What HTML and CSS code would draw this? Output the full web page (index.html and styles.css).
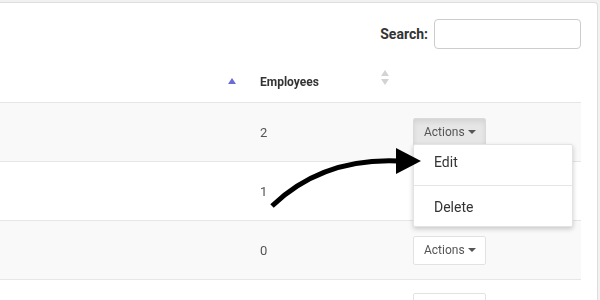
FILE: index.html
```html
<!DOCTYPE html>
<html lang="en">
  <head>
    <title>Departments</title>
    <meta charset="UTF-8" />
    <meta name="viewport" content="width=device-width, initial-scale=1.0" />
    <link rel="stylesheet" href="styles.css">
  </head>
  <body>
    <div class="card">
      <div class="search-row">
        <label for="search">Search:</label>
        <input id="search" type="search" class="search-input" />
      </div>

      <table class="data-table">
        <colgroup>
          <col class="col-name" />
          <col class="col-count" />
          <col class="col-actions" />
        </colgroup>
        <thead>
          <tr>
            <th>
              <div class="th-inner">
                <span></span>
                <span class="sort sort-asc"></span>
              </div>
            </th>
            <th>
              <div class="th-inner">
                <span>Employees</span>
                <span class="sort sort-both"></span>
              </div>
            </th>
            <th></th>
          </tr>
        </thead>
        <tbody>
          <tr class="odd">
            <td></td>
            <td>2</td>
            <td>
              <div class="dropdown open">
                <button class="btn active">Actions <span class="caret"></span></button>
                <ul class="dropdown-menu">
                  <li><a href="#">Edit</a></li>
                  <li class="divider"></li>
                  <li><a href="#">Delete</a></li>
                </ul>
              </div>
            </td>
          </tr>
          <tr>
            <td></td>
            <td>1</td>
            <td></td>
          </tr>
          <tr class="odd">
            <td></td>
            <td>0</td>
            <td>
              <div class="dropdown">
                <button class="btn">Actions <span class="caret"></span></button>
              </div>
            </td>
          </tr>
          <tr>
            <td></td>
            <td></td>
            <td>
              <!-- only the top edge of this row's button is on screen -->
              <div class="dropdown">
                <button class="btn" aria-label="Actions"></button>
              </div>
            </td>
          </tr>
        </tbody>
      </table>
    </div>

    <!-- annotation arrow pointing at the Edit item -->
    <svg class="callout" width="600" height="300" viewBox="0 0 600 300">
      <path d="M272 206 Q 322 158 398 161" fill="none" stroke="#000" stroke-width="5" />
      <polygon points="396,148 421,161 396,174" fill="#000" />
    </svg>
  </body>
</html>
```

FILE: styles.css
```css
* {
  margin: 0;
  padding: 0;
  box-sizing: border-box;
}

body {
  height: 100vh;
  overflow: hidden;
  background: #f1f1f1;
  font-family: Roboto, "Liberation Sans", sans-serif;
  color: #555;
  position: relative;
  -webkit-font-smoothing: antialiased;
}

.card {
  margin: 2px 2px 0 0;
  padding-right: 16px;
  height: 400px;
  background: white;
  border-top: 1px solid #dedede;
  border-right: 1px solid #dedede;
  border-top-right-radius: 4px;
}

.search-row {
  display: flex;
  justify-content: flex-end;
  align-items: center;
  padding-top: 16px;
}

.search-row label {
  font-size: 14px;
  font-weight: 700;
  color: #333;
  margin-right: 6px;
}

.search-input {
  width: 147px;
  height: 30px;
  border: 1px solid #ccc;
  border-radius: 4px;
  background: white;
  outline: none;
}

.data-table {
  width: 100%;
  margin-top: 10px;
  border-collapse: separate;
  border-spacing: 0;
  table-layout: fixed;
  will-change: transform;
}

.col-name {
  width: 248px;
}

.col-count {
  width: 153px;
}

th {
  padding: 15px 12px 11px;
  border-bottom: 1px solid #e6e6e6;
  text-align: left;
  font-size: 12px;
  font-weight: 700;
  color: #333;
  line-height: 17px;
}

.th-inner {
  display: flex;
  justify-content: space-between;
  align-items: flex-start;
}

.sort {
  width: 8px;
  position: relative;
}

.sort::before,
.sort::after {
  content: "";
  position: absolute;
  left: 0;
  border-left: 4px solid transparent;
  border-right: 4px solid transparent;
}

.sort-asc {
  height: 6px;
  margin-top: -3px;
}

.sort-asc::before {
  top: 0;
  border-bottom: 6px solid #6b6bd9;
}

.sort-both {
  height: 15px;
  margin-top: -4px;
}

.sort-both::before {
  top: 0;
  border-bottom: 6px solid #d3d3d3;
}

.sort-both::after {
  bottom: 0;
  border-top: 6px solid #d3d3d3;
}

td {
  height: 59px;
  padding: 0 12px;
  border-bottom: 1px solid #e6e6e6;
  font-size: 13px;
  color: #555;
  vertical-align: middle;
}

tr.odd td {
  background: #f9f9f9;
}

.dropdown {
  position: relative;
  display: inline-block;
}

.btn {
  width: 73px;
  height: 29px;
  padding: 0 10px;
  display: flex;
  align-items: center;
  justify-content: space-between;
  font-family: Roboto, "Liberation Sans", sans-serif;
  font-size: 12px;
  color: #555;
  background: white;
  border: 1px solid #e2e2e2;
  border-radius: 2px;
}

.btn.active {
  background: #e6e6e6;
  border-color: #dadada;
  box-shadow: inset 0 3px 5px rgba(0, 0, 0, 0.08);
}

.caret {
  width: 0;
  height: 0;
  border-left: 4px solid transparent;
  border-right: 4px solid transparent;
  border-top: 4px solid #555;
  margin-left: 3px;
}

.dropdown-menu {
  position: absolute;
  top: 26px;
  left: 0;
  width: 160px;
  list-style: none;
  background: white;
  border: 1px solid #e3e3e3;
  border-radius: 2px;
  box-shadow: 0 2px 5px rgba(0, 0, 0, 0.2);
  z-index: 10;
}

.dropdown-menu a {
  display: block;
  height: 36px;
  line-height: 35px;
  padding: 0 20px;
  font-size: 14px;
  color: #333;
  text-decoration: none;
}

.dropdown-menu .divider {
  height: 1px;
  margin: 4px 0;
  background: #e5e5e5;
}

.callout {
  position: absolute;
  top: 0;
  left: 0;
  pointer-events: none;
  z-index: 20;
}
```
